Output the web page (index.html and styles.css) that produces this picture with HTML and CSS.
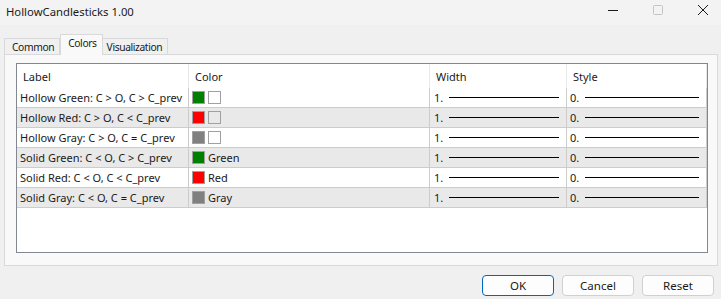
FILE: index.html
```html
<!DOCTYPE html>
<html lang="en">
<head>
    <meta charset="UTF-8">
    <meta name="viewport" content="width=device-width, initial-scale=1.0">
    <title>HollowCandlesticks 1.00</title>
    <link rel="stylesheet" href="styles.css">
</head>
<body>
    <div class="titlebar">
        <span class="title">HollowCandlesticks 1.00</span>
        <div class="controls">
            <span class="ctl"><svg width="12" height="12" viewBox="0 0 12 12"><path d="M1 6.5h10" stroke="#1a1a1a" stroke-width="1"/></svg></span>
            <span class="ctl"><svg width="12" height="12" viewBox="0 0 12 12"><rect x="1.5" y="1.5" width="9" height="9" rx="1" fill="none" stroke="#c4c4c4"/></svg></span>
            <span class="ctl"><svg width="12" height="12" viewBox="0 0 12 12"><path d="M1 1l10 10M11 1L1 11" stroke="#1a1a1a" stroke-width="1"/></svg></span>
        </div>
    </div>

    <div class="tabs">
        <div class="tab">Common</div>
        <div class="tab active">Colors</div>
        <div class="tab">Visualization</div>
    </div>

    <div class="panel">
        <div class="list">
            <div class="row head">
                <div class="cell c-label">Label</div>
                <div class="cell c-color">Color</div>
                <div class="cell c-width">Width</div>
                <div class="cell c-style">Style</div>
            </div>
            <div class="row">
                <div class="cell c-label">Hollow Green: C &gt; O, C &gt; C_prev</div>
                <div class="cell c-color"><span class="sw green"></span><span class="sw white"></span></div>
                <div class="cell c-width"><span>1.</span><span class="line"></span></div>
                <div class="cell c-style"><span>0.</span><span class="line"></span></div>
            </div>
            <div class="row alt">
                <div class="cell c-label">Hollow Red: C &gt; O, C &lt; C_prev</div>
                <div class="cell c-color"><span class="sw red"></span><span class="sw empty"></span></div>
                <div class="cell c-width"><span>1.</span><span class="line"></span></div>
                <div class="cell c-style"><span>0.</span><span class="line"></span></div>
            </div>
            <div class="row">
                <div class="cell c-label">Hollow Gray: C &gt; O, C = C_prev</div>
                <div class="cell c-color"><span class="sw gray"></span><span class="sw white"></span></div>
                <div class="cell c-width"><span>1.</span><span class="line"></span></div>
                <div class="cell c-style"><span>0.</span><span class="line"></span></div>
            </div>
            <div class="row alt">
                <div class="cell c-label">Solid Green: C &lt; O, C &gt; C_prev</div>
                <div class="cell c-color"><span class="sw green"></span><span>Green</span></div>
                <div class="cell c-width"><span>1.</span><span class="line"></span></div>
                <div class="cell c-style"><span>0.</span><span class="line"></span></div>
            </div>
            <div class="row">
                <div class="cell c-label">Solid Red: C &lt; O, C &lt; C_prev</div>
                <div class="cell c-color"><span class="sw red"></span><span>Red</span></div>
                <div class="cell c-width"><span>1.</span><span class="line"></span></div>
                <div class="cell c-style"><span>0.</span><span class="line"></span></div>
            </div>
            <div class="row alt">
                <div class="cell c-label">Solid Gray: C &lt; O, C = C_prev</div>
                <div class="cell c-color"><span class="sw gray"></span><span>Gray</span></div>
                <div class="cell c-width"><span>1.</span><span class="line"></span></div>
                <div class="cell c-style"><span>0.</span><span class="line"></span></div>
            </div>
        </div>
    </div>

    <div class="buttons">
        <button class="btn default">OK</button>
        <button class="btn">Cancel</button>
        <button class="btn">Reset</button>
    </div>
</body>
</html>
```

FILE: styles.css
```css
body {
    margin: 0;
    font-family: "Noto Sans", sans-serif;
    font-size: 11px;
    color: #1a1a1a;
    background-color: #f0f0f0;
}
.titlebar {
    height: 25px;
    background-color: #f3f3f3;
    display: flex;
    align-items: center;
    justify-content: space-between;
    padding-left: 6px;
}
.title {
    font-size: 11.3px;
    margin-top: -3px;
}
.controls {
    display: flex;
    align-items: center;
    gap: 33px;
    margin: -5px 12px 0 0;
}
.ctl {
    width: 12px;
    height: 12px;
    display: flex;
}
.tabs {
    display: flex;
    align-items: flex-end;
    padding-left: 4px;
    margin-top: 9px;
    height: 20px;
    font-size: 10.3px;
    letter-spacing: -0.4px;
}
.tab {
    height: 15px;
    line-height: 16px;
    padding: 0 5px 0 7px;
    border: 1px solid #d9d9d9;
    border-bottom: none;
    background-color: #f0f0f0;
}
.tab + .tab {
    border-left: none;
}
.tab.active {
    height: 20px;
    line-height: 16px;
    padding: 0 5px 0 7px;
    background-color: #f9f9f9;
    position: relative;
    z-index: 1;
    margin-bottom: -1px;
    border-left: 1px solid #d9d9d9;
}
.tab.active + .tab {
    border-left: none;
    padding-left: 4px;
}
.panel {
    margin: 0 3px 0 4px;
    height: 202px;
    border: 1px solid #d9d9d9;
    background-color: #f9f9f9;
    padding: 8px 9px 0 11px;
}
.list {
    height: 188px;
    border: 1px solid #828790;
    background-color: white;
}
.row {
    display: grid;
    grid-template-columns: 172px 241px 137px 1fr;
    height: 19px;
    border-bottom: 1px solid #cccccc;
}
.row.head {
    height: 24px;
    border-bottom: none;
}
.row.alt {
    background-color: #e9e9e9;
}
.cell {
    display: flex;
    align-items: center;
    padding-left: 3px;
    border-right: 1px solid #cccccc;
    white-space: nowrap;
    overflow: hidden;
}
.head .cell {
    padding-left: 6px;
    border-right-color: #e8e8e8;
}
.sw {
    flex: none;
    width: 11px;
    height: 11px;
    border: 1px solid #a0a0a0;
    margin-right: 3px;
}
.sw.green {
    background-color: #008000;
}
.sw.red {
    background-color: #ff0000;
}
.sw.gray {
    background-color: #808080;
}
.sw.white {
    background-color: white;
}
.c-width, .c-style {
    gap: 6px;
    padding-right: 7px;
}
.c-width {
    padding-left: 4px;
}
.line {
    flex: 1;
    height: 1px;
    background-color: #000;
}
.buttons {
    display: flex;
    justify-content: flex-end;
    gap: 8px;
    padding: 9px 7px 0 0;
}
.btn {
    width: 72px;
    height: 21px;
    font-family: "Noto Sans", sans-serif;
    font-size: 11.5px;
    color: #1a1a1a;
    background-color: #fdfdfd;
    border: 1px solid #d0d0d0;
    border-radius: 4px;
    padding: 0;
}
.btn.default {
    border-color: #0067c0;
}
```
